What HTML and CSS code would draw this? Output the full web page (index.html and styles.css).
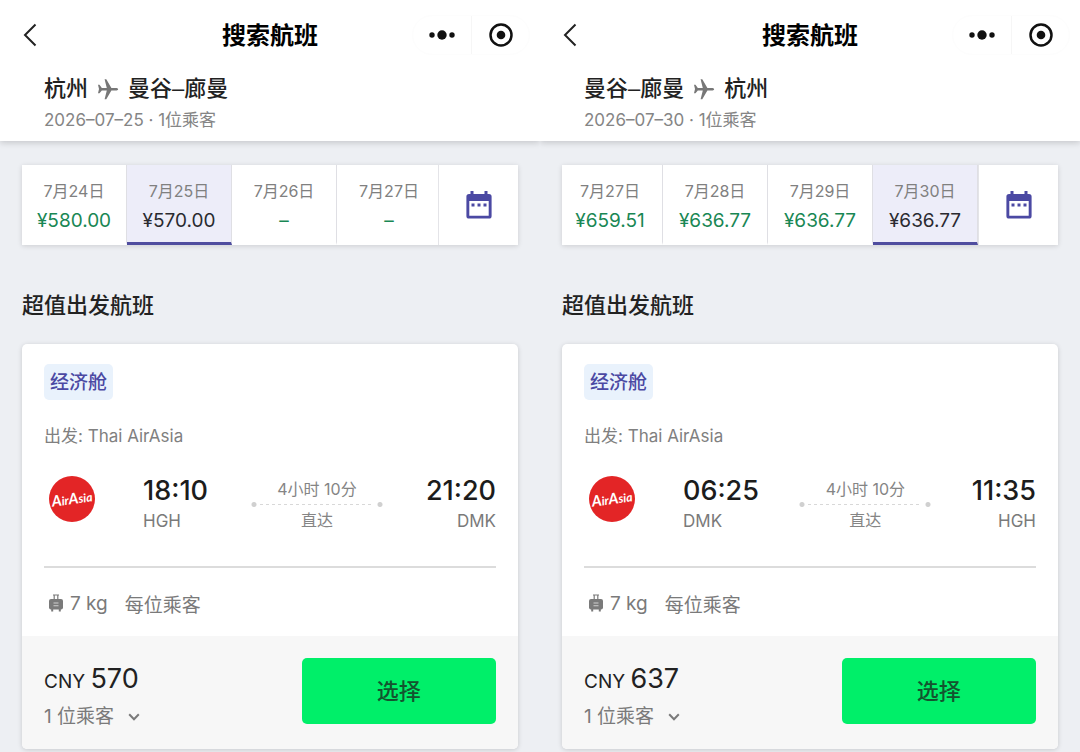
FILE: index.html
```html
<!DOCTYPE html>
<html lang="zh-CN">
<head>
<meta charset="utf-8">
<meta name="viewport" content="width=device-width, initial-scale=1">
<title>搜索航班</title>
<link rel="stylesheet" href="styles.css">
</head>
<body>
<svg class="sprite" aria-hidden="true">
  <symbol id="back" viewBox="0 0 14 24"><path d="M12.5 1.5 2 12l10.500 10.500" fill="none" stroke="currentColor" stroke-width="2"/></symbol>
  <symbol id="more" viewBox="0 0 26 10"><circle cx="3" cy="5" r="2.700"/><circle cx="13" cy="5" r="4.700"/><circle cx="23" cy="5" r="2.700"/></symbol>
  <symbol id="target" viewBox="0 0 24 24"><circle cx="12" cy="12" r="10.500" fill="none" stroke="currentColor" stroke-width="2.500"/><circle cx="12" cy="12" r="4.300"/></symbol>
  <symbol id="plane" viewBox="0 0 22 22"><path d="M1 6.800h1.500l2.300 3.100h5L7.600 1.200h1.700l5.100 8.700h5.200c2.100.3 2.100 2.300 0 2.600h-5.200l-5.100 8.700H7.600l2.200-8.700h-5l-2.300 2.700H1l1-4.100z"/></symbol>
  <symbol id="calendar" viewBox="0 0 26 29"><path fill-rule="evenodd" d="M4.500 1h3v3h11V1h3v3H23a2.600 2.600 0 0 1 2.600 2.600V26a2.600 2.600 0 0 1-2.600 2.600H3A2.600 2.600 0 0 1 .4 26V6.600A2.600 2.600 0 0 1 3 4h1.500zM3.300 11v14.700h19.400V11z"/><path d="M5.500 13.500h3v3h-3zm6 0h3v3h-3zm6 0h3v3h-3z"/></symbol>
  <symbol id="luggage" viewBox="0 0 14 18"><path d="M4 1h6M5.200 1v5M8.800 1v5" fill="none" stroke="currentColor" stroke-width="1.200"/><rect y="5" width="14" height="10.500" rx="2"/><path d="M2.200 15h2v2.500h-2zm7.600 0h2v2.500h-2z"/><path d="M4.500 9h5M4.500 11.800h5" stroke="#d0d0d0" stroke-width="1.100"/></symbol>
  <symbol id="chevron" viewBox="0 0 12 8"><path d="m1.200 1.200 4.800 5 4.800-5" fill="none" stroke="currentColor" stroke-width="2"/></symbol>
</svg>
<main class="screens">
  <section class="screen">
    <header class="top">
      <div class="bar">
        <button class="icon-btn" aria-label="返回"><svg class="i-back"><use href="#back"/></svg></button>
        <h1 class="title">搜索航班</h1>
        <div class="capsule">
          <button class="cap-btn" aria-label="更多"><svg class="i-more"><use href="#more"/></svg></button>
          <button class="cap-btn" aria-label="关闭"><svg class="i-target"><use href="#target"/></svg></button>
        </div>
      </div>
      <div class="trip">
        <p class="route"><span>杭州</span><svg class="i-plane"><use href="#plane"/></svg><span>曼谷–廊曼</span></p>
        <p class="meta">2026–07–25 · 1位乘客</p>
      </div>
    </header>
    <div class="content">
      <nav class="dates" aria-label="日期">
        <div class="strip">
          <button class="day"><span>7月24日</span><span class="fare">¥580.00</span></button>
          <button class="day selected" aria-current="date"><span>7月25日</span><span class="fare">¥570.00</span></button>
          <button class="day"><span>7月26日</span><span class="fare">–</span></button>
          <button class="day"><span>7月27日</span><span class="fare">–</span></button>
        </div>
        <button class="cal" aria-label="日历"><svg class="i-cal"><use href="#calendar"/></svg></button>
      </nav>
      <h2 class="heading">超值出发航班</h2>
      <article class="card">
        <div class="body">
          <span class="cabin">经济舱</span>
          <p class="carrier">出发: Thai AirAsia</p>
          <div class="flight">
            <div class="logo"><svg class="i-airline" viewBox="0 0 46 46"><circle cx="23" cy="23" r="23" fill="#e32526"/><text class="logo-text" x="23" y="28" text-anchor="middle" transform="rotate(-8 23 23)"><tspan class="cap">A</tspan>ir<tspan class="cap">A</tspan>sia</text></svg></div>
            <div class="legs">
              <div class="stop"><time class="time">18:10</time><span>HGH</span></div>
              <div class="path"><span>4小时 10分</span><i class="line"></i><span>直达</span></div>
              <div class="stop end"><time class="time">21:20</time><span>DMK</span></div>
            </div>
          </div>
          <div class="bag"><svg class="i-bag"><use href="#luggage"/></svg><span>7 kg</span><span class="each">每位乘客</span></div>
        </div>
        <footer class="foot">
          <div class="cost">
            <p class="price">CNY <b class="amount">570</b></p>
            <button class="pax">1 位乘客<svg class="i-chev"><use href="#chevron"/></svg></button>
          </div>
          <button class="choose">选择</button>
        </footer>
      </article>
    </div>
  </section>
  <section class="screen">
    <header class="top">
      <div class="bar">
        <button class="icon-btn" aria-label="返回"><svg class="i-back"><use href="#back"/></svg></button>
        <h1 class="title">搜索航班</h1>
        <div class="capsule">
          <button class="cap-btn" aria-label="更多"><svg class="i-more"><use href="#more"/></svg></button>
          <button class="cap-btn" aria-label="关闭"><svg class="i-target"><use href="#target"/></svg></button>
        </div>
      </div>
      <div class="trip">
        <p class="route"><span>曼谷–廊曼</span><svg class="i-plane"><use href="#plane"/></svg><span>杭州</span></p>
        <p class="meta">2026–07–30 · 1位乘客</p>
      </div>
    </header>
    <div class="content">
      <nav class="dates" aria-label="日期">
        <div class="strip at-end">
          <button class="day"><span>7月27日</span><span class="fare">¥659.51</span></button>
          <button class="day"><span>7月28日</span><span class="fare">¥636.77</span></button>
          <button class="day"><span>7月29日</span><span class="fare">¥636.77</span></button>
          <button class="day selected" aria-current="date"><span>7月30日</span><span class="fare">¥636.77</span></button>
        </div>
        <button class="cal" aria-label="日历"><svg class="i-cal"><use href="#calendar"/></svg></button>
      </nav>
      <h2 class="heading">超值出发航班</h2>
      <article class="card">
        <div class="body">
          <span class="cabin">经济舱</span>
          <p class="carrier">出发: Thai AirAsia</p>
          <div class="flight">
            <div class="logo"><svg class="i-airline" viewBox="0 0 46 46"><circle cx="23" cy="23" r="23" fill="#e32526"/><text class="logo-text" x="23" y="28" text-anchor="middle" transform="rotate(-8 23 23)"><tspan class="cap">A</tspan>ir<tspan class="cap">A</tspan>sia</text></svg></div>
            <div class="legs">
              <div class="stop"><time class="time">06:25</time><span>DMK</span></div>
              <div class="path"><span>4小时 10分</span><i class="line"></i><span>直达</span></div>
              <div class="stop end"><time class="time">11:35</time><span>HGH</span></div>
            </div>
          </div>
          <div class="bag"><svg class="i-bag"><use href="#luggage"/></svg><span>7 kg</span><span class="each">每位乘客</span></div>
        </div>
        <footer class="foot">
          <div class="cost">
            <p class="price">CNY <b class="amount">637</b></p>
            <button class="pax">1 位乘客<svg class="i-chev"><use href="#chevron"/></svg></button>
          </div>
          <button class="choose">选择</button>
        </footer>
      </article>
    </div>
  </section>
</main>
</body>
</html>
```
FILE: styles.css
```css
* { box-sizing: border-box; }
body, h1, h2, p { margin: 0; }
body {
  background: #edeff3;
  color: #222;
  font-family: Inter, "Noto Sans CJK SC", sans-serif;
  font-size: 16px;
}
button {
  margin: 0;
  padding: 0;
  border: 0;
  background: none;
  color: inherit;
  font: inherit;
  cursor: pointer;
}
svg { display: block; fill: currentColor; flex: none; }
.sprite { position: absolute; width: 0; height: 0; }
.screens { display: grid; grid-template-columns: 1fr 1fr; min-height: 100vh; }
.screen { overflow: hidden; }

.top {
  background: #fff;
  box-shadow: 0 2px 6px rgba(0, 0, 0, .16);
}
.bar {
  display: grid;
  grid-template-columns: 1fr auto 1fr;
  align-items: center;
  height: 70px;
  padding: 0 10px 0 22px;
}
.icon-btn { justify-self: start; }
.i-back { width: 16px; height: 24px; }
.title { margin-left: -12px; padding-top: 2px; font-size: 24px; line-height: 32px; font-weight: 700; color: #000; }
.capsule {
  justify-self: end;
  display: grid;
  grid-template-columns: 1fr 1fr;
  width: 118px;
  height: 40px;
  border: 1px solid #fdfdfd;
  border-radius: 20px;
  color: #111;
}
.cap-btn { display: grid; place-items: center; }
.cap-btn + .cap-btn { border-left: 1px solid #f6f6f6; }
.i-more { width: 26px; height: 10px; }
.i-target { width: 24px; height: 24px; }
.trip { padding: 3px 44px 7px; }
.route {
  display: flex;
  align-items: center;
  gap: 9px;
  font-family: "Liberation Sans", "Noto Sans CJK SC", sans-serif;
  font-size: 22px;
  line-height: 32px;
  font-weight: 500;
}
.i-plane { width: 22px; height: 22px; color: #777; }
.meta { padding-top: 1px; font-size: 17px; line-height: 28px; color: #858585; }

.content { padding: 24px 22px 0; }
.dates { display: flex; height: 80px; background: #fff; box-shadow: 0 1px 5px rgba(0, 0, 0, .14); }
.strip { display: flex; flex: 1; min-width: 0; overflow: hidden; }
.at-end { justify-content: flex-end; }
.day {
  flex: 0 0 calc(25% + 1px);
  display: flex;
  flex-direction: column;
  align-items: center;
  padding-top: 12px;
  border-right: 1px solid #dfdfe4;
  border-bottom: 3px solid transparent;
  color: #808080;
  font-size: 16px;
  line-height: 28px;
}
.fare { font-size: 19px; line-height: 32px; color: #198754; }
.selected { background: #ededf9; border-bottom-color: #4f4d9f; }
.selected .fare { color: #2a2a30; }
.cal { width: 80px; padding-bottom: 2px; display: grid; place-items: center; color: #4b49a3; border-left: 1px solid #e4e4e8; }
.i-cal { width: 26px; height: 29px; }
.heading { margin: 44px 0 23px; font-size: 22px; line-height: 32px; font-weight: 500; }

.card { background: #fff; border-radius: 5px; box-shadow: 0 1px 5px rgba(0, 0, 0, .16); overflow: hidden; }
.body { padding: 20px 22px 0; }
.cabin {
  display: inline-block;
  padding: 1px 6px 0;
  border-radius: 5px;
  background: #e9f2fc;
  color: #4b49a3;
  font-size: 19px;
  line-height: 35px;
  font-weight: 500;
}
.carrier { margin-top: 22px; font-size: 17px; line-height: 28px; color: #808080; }
.flight {
  display: flex;
  height: 118px;
  padding-top: 25px;
  border-bottom: 2px solid #dcdcdc;
}
.logo { width: 99px; padding: 1px 0 0 5px; }
.i-airline { width: 46px; height: 46px; }
.logo-text { font: italic 700 12px Lato, sans-serif; fill: #fff; }
.cap { font-size: 15px; }
.legs { flex: 1; display: flex; justify-content: space-between; }
.stop { display: flex; flex-direction: column; font-size: 17px; line-height: 28px; color: #7a7a7a; }
.end { text-align: right; }
.time { font-size: 27px; line-height: 32px; font-weight: 500; color: #1c1c1c; }
.path {
  display: flex;
  flex-direction: column;
  align-items: center;
  width: 132px;
  padding-top: 1px;
  color: #858585;
  font-size: 16px;
  line-height: 26px;
}
.line {
  width: 100%;
  height: 5px;
  background:
    radial-gradient(circle, #d0d0d0 2px, transparent 3px) left / 6px 6px no-repeat,
    radial-gradient(circle, #d0d0d0 2px, transparent 3px) right / 6px 6px no-repeat,
    repeating-linear-gradient(90deg, #d8d8d8 0 3px, transparent 3px 6px) center / calc(100% - 18px) 1px no-repeat;
}
.bag { display: flex; align-items: center; height: 68px; padding: 2px 0 0 5px; font-size: 19px; color: #7a7a7a; }
.i-bag { width: 14px; height: 18px; margin-right: 7px; }
.each { margin-left: 17px; }
.foot {
  display: flex;
  justify-content: space-between;
  padding: 22px 22px 17px;
  background: #f7f7f7;
}
.price { padding-top: 1px; font-size: 19px; line-height: 40px; }
.amount { font-size: 27px; font-weight: 400; }
.pax { display: flex; align-items: center; gap: 14px; font-size: 19px; line-height: 30px; color: #7a7a7a; }
.i-chev { width: 12px; height: 8px; }
.choose {
  width: 43%;
  height: 66px;
  padding-bottom: 5px;
  border-radius: 5px;
  background: #00ef69;
  color: #14532f;
  font-size: 22px;
  font-weight: 500;
}
```
